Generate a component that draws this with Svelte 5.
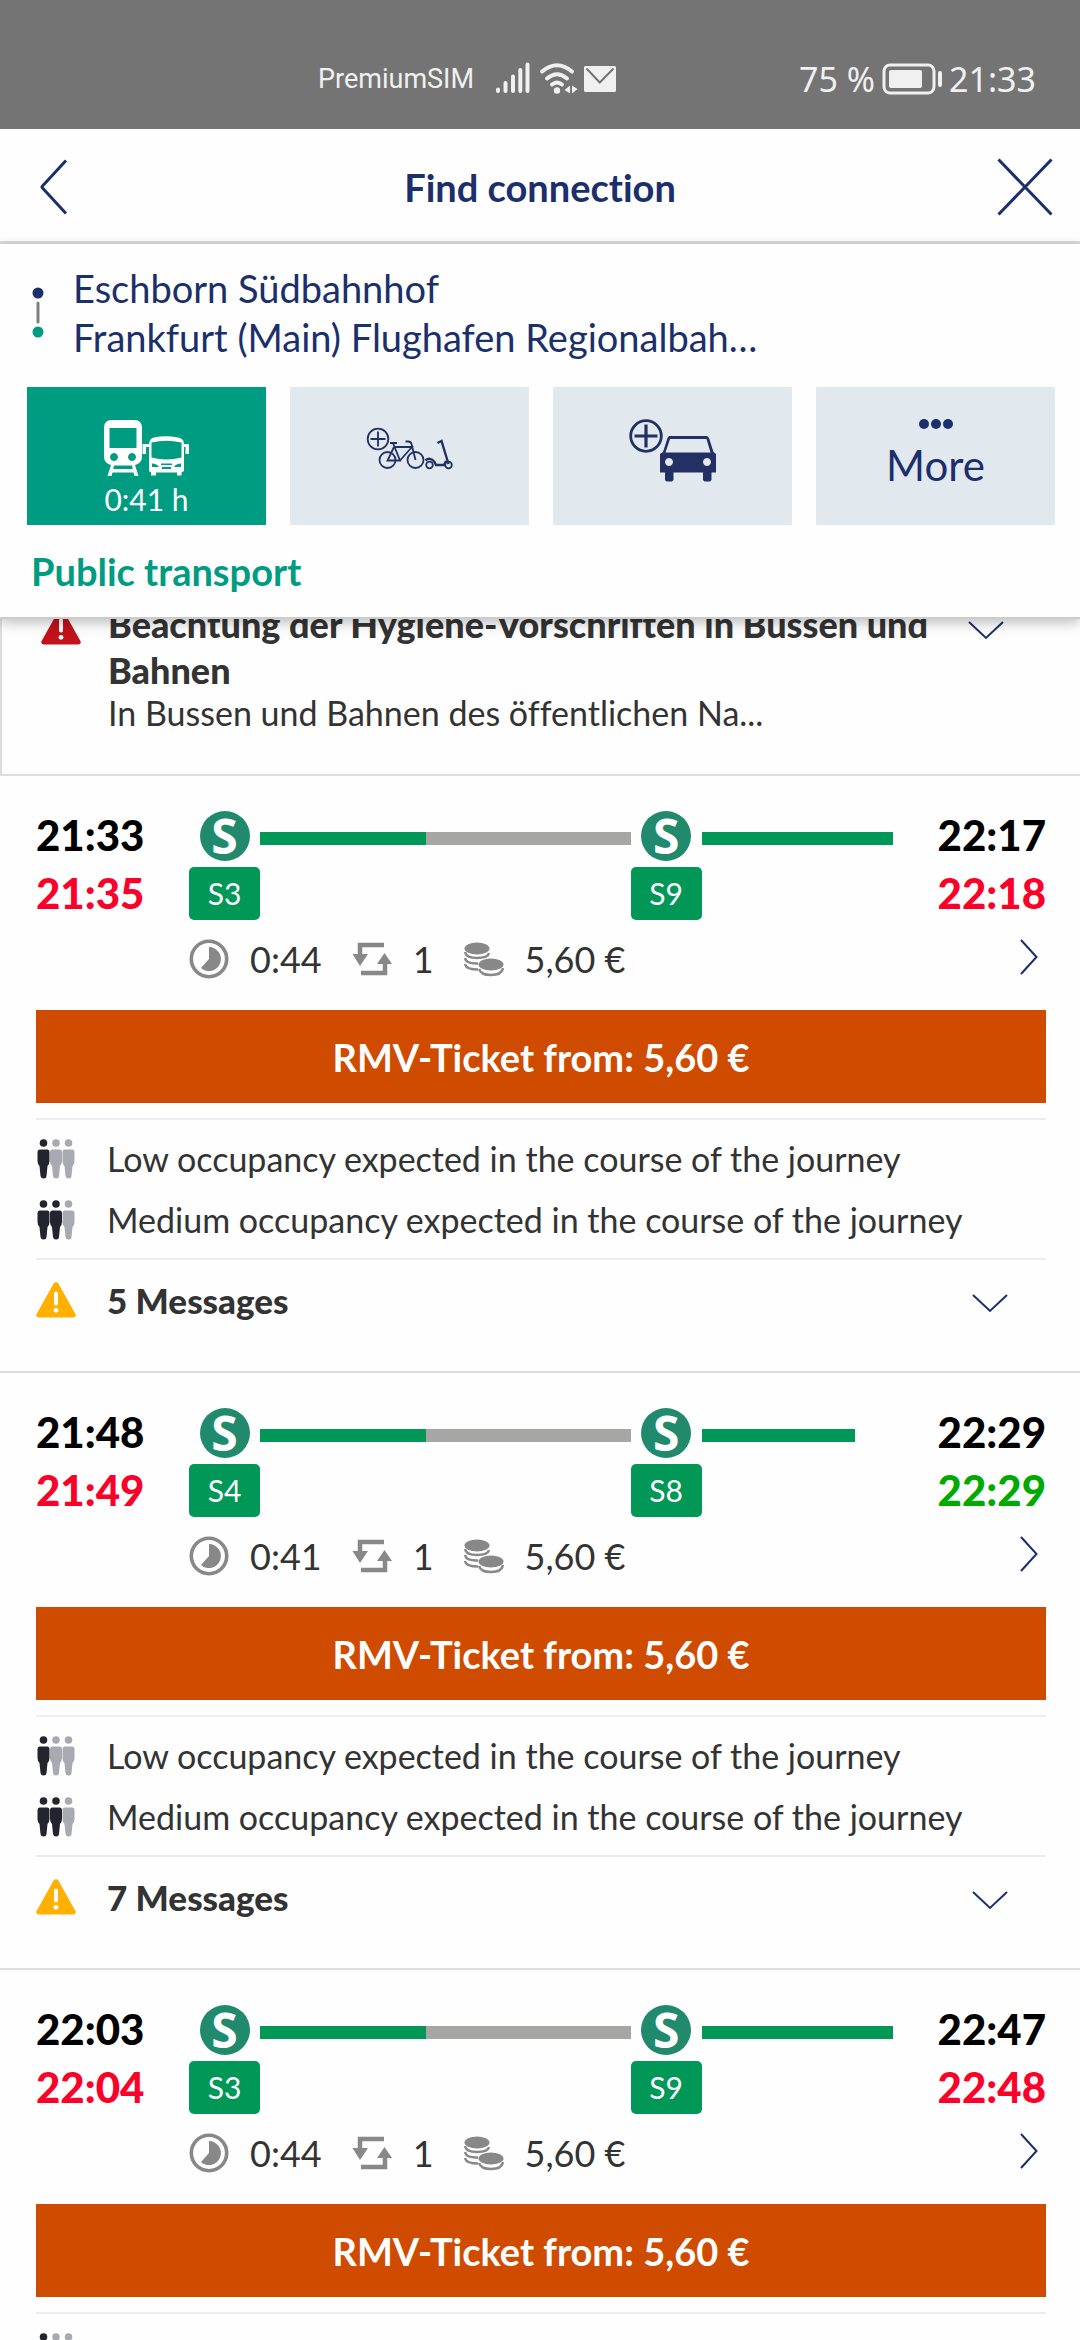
<script lang="ts">
  type Part = { size: number; kind: "ride" | "wait" | "rest" };
  type Leg = { line: string; parts: Part[] };

  const shortRide: Leg["parts"] = [
    { size: 166, kind: "ride" },
    { size: 204, kind: "wait" },
  ];

  const connections = [
    {
      departure: "21:33",
      departureReal: "21:35",
      arrival: "22:17",
      arrivalReal: "22:18",
      onTime: false,
      duration: "0:44",
      changes: 1,
      price: "5,60 €",
      messages: 5,
      legs: [
        { line: "S3", parts: shortRide },
        { line: "S9", parts: [{ size: 191, kind: "ride" }] },
      ] as Leg[],
    },
    {
      departure: "21:48",
      departureReal: "21:49",
      arrival: "22:29",
      arrivalReal: "22:29",
      onTime: true,
      duration: "0:41",
      changes: 1,
      price: "5,60 €",
      messages: 7,
      legs: [
        { line: "S4", parts: shortRide },
        {
          line: "S8",
          parts: [
            { size: 153, kind: "ride" },
            { size: 38, kind: "rest" },
          ],
        },
      ] as Leg[],
    },
    {
      departure: "22:03",
      departureReal: "22:04",
      arrival: "22:47",
      arrivalReal: "22:48",
      onTime: false,
      duration: "0:44",
      changes: 1,
      price: "5,60 €",
      messages: 5,
      legs: [
        { line: "S3", parts: shortRide },
        { line: "S9", parts: [{ size: 191, kind: "ride" }] },
      ] as Leg[],
    },
  ];

  const occupancy = [
    { level: 1, label: "Low occupancy expected in the course of the journey" },
    { level: 2, label: "Medium occupancy expected in the course of the journey" },
  ];
</script>

{#snippet chevronDown()}
  <svg class="chevron" width="36" height="20" viewBox="0 0 36 20" aria-hidden="true">
    <path d="M1 1 L18 17 L35 1" fill="none" stroke="#1a2f6b" stroke-width="2" />
  </svg>
{/snippet}

{#snippet warning(color: string)}
  <svg class="warning" width="40" height="36" viewBox="0 0 40 36" aria-hidden="true">
    <path
      d="M17.6 1.6 a2.8 2.8 0 0 1 4.8 0 L39.4 32 a2.3 2.3 0 0 1 -2 3.5 H2.6 a2.3 2.3 0 0 1 -2 -3.5 Z"
      fill={color}
    />
    <rect x="18" y="9.5" width="4" height="14" rx="2" fill="#fff" />
    <circle cx="20" cy="28.3" r="2.4" fill="#fff" />
  </svg>
{/snippet}

<div class="screen">
  <div class="status-bar">
    <div class="status-left">
      <span class="carrier">PremiumSIM</span>
      <svg width="124" height="48" viewBox="0 0 124 48" aria-hidden="true">
        <g fill="none" stroke="#f0f0f0" stroke-width="4" stroke-linecap="round">
          <path d="M4 34.5 V36 M11.5 28 V36 M19 21.5 V36 M26.3 15 V36 M33.5 9.5 V36" />
          <path d="M48 16.5 Q63 4 78 16.5" />
          <path d="M53 23.5 Q63 15 73 23.5" />
          <path d="M58 29.5 Q63 25.5 68 29.5" />
        </g>
        <circle cx="63" cy="35.5" r="3.2" fill="#f0f0f0" />
        <path d="M70.5 35 L76 30.5 V38.5 Z M83.5 34 L78 38.5 V30.5 Z" fill="#f0f0f0" />
        <rect x="90" y="11" width="32" height="26" rx="1.5" fill="#f0f0f0" />
        <path d="M92.5 13.5 L105.8 27.5 L119.5 13.5" fill="none" stroke="#747474" stroke-width="2" />
      </svg>
    </div>
    <div class="status-right">
      <span>75 %</span>
      <svg width="62" height="34" viewBox="0 0 62 34" aria-hidden="true">
        <rect x="3" y="3" width="50" height="28" rx="6" fill="none" stroke="#f0f0f0" stroke-width="3" />
        <rect x="8" y="8" width="33" height="18" rx="2" fill="#f0f0f0" />
        <rect x="57" y="9" width="4" height="16" rx="2" fill="#f0f0f0" />
      </svg>
      <span>21:33</span>
    </div>
  </div>

  <header class="title-bar">
    <button class="icon-button back" aria-label="Back">
      <svg width="28" height="56" viewBox="0 0 28 56">
        <path d="M26 1.5 L2.5 27 Q1.5 28 2.5 29 L26 54.5" fill="none" stroke="#1a2f6b" stroke-width="3" />
      </svg>
    </button>
    <h1>Find connection</h1>
    <button class="icon-button" aria-label="Close">
      <svg width="56" height="58" viewBox="0 0 56 58">
        <path d="M1.5 1.5 L54.5 56.5 M54.5 1.5 L1.5 56.5" fill="none" stroke="#1a2f6b" stroke-width="3" />
      </svg>
    </button>
  </header>

  <section class="search">
    <div class="route">
      <svg width="14" height="54" viewBox="0 0 14 54" aria-hidden="true">
        <circle cx="7" cy="7" r="5.5" fill="#1a2f6b" />
        <path d="M7 17 V36" stroke="#808080" stroke-width="3" stroke-linecap="round" />
        <circle cx="7" cy="46" r="5.5" fill="#009c82" />
      </svg>
      <div class="stations">
        <div>Eschborn Südbahnhof</div>
        <div>Frankfurt (Main) Flughafen Regionalbah…</div>
      </div>
    </div>

    <nav class="modes">
      <button class="mode active">
        <svg width="88" height="58" viewBox="0 0 88 58" aria-hidden="true">
          <path
            fill="#fff"
            fill-rule="evenodd"
            d="M8 1 H32 a7 7 0 0 1 7 7 V38 a8 8 0 0 1 -7 8 L35.5 57 H31.5 L30.5 53.5 H9.5 L8.5 57 H4.5 L8 46 a8 8 0 0 1 -7 -8 V8 a7 7 0 0 1 7 -7 Z M6.5 9 V29 H33.5 V9 Z M11 34 a4 4 0 1 0 .01 0 Z M29 34 a4 4 0 1 0 .01 0 Z M11 46.5 L10.3 50 H29.7 L29 46.5 Z"
          />
          <path
            fill="#fff"
            fill-rule="evenodd"
            d="M46 26 Q46 19.5 51 18.5 Q63 16 75 18.5 Q81 19.5 81 25 H86 V35 H82.5 V28 H81 V52 L78.5 53.5 V56.5 H74 V53.5 H53 V56.5 H48 V53.5 L46 52 V28 H43 V35 H39.5 V25 H46 Z M48.5 23.5 V38.5 Q63 42.5 78.5 38.5 V23.5 Q63 20 48.5 23.5 Z M49 44.5 V48 H56 Q54 44.5 49 44.5 Z M78 44.5 V48 H71 Q73 44.5 78 44.5 Z M58 44.5 V46 H69 V44.5 Z M59 48 V50 H68 V48 Z"
          />
        </svg>
        <span class="mode-time">0:41 h</span>
      </button>
      <button class="mode" aria-label="Bike and scooter">
        <svg width="88" height="58" viewBox="0 0 88 58">
          <g fill="none" stroke="#233063" stroke-width="1.8">
            <circle cx="12" cy="20" r="10.3" />
            <path d="M12 12.5 V27.5 M4.5 20 H19.5" />
            <circle cx="21.5" cy="41" r="8" />
            <circle cx="49.5" cy="41" r="8" />
            <path d="M24 24 H31 M27 24 L34 41.5 H21.5 L28 28 M28 28 H46 L34 41.5 M39.5 22.5 H42 Q45 22.5 45.5 25 L49.5 41" />
            <circle cx="63.5" cy="46" r="3.3" />
            <circle cx="82.5" cy="46" r="3.3" />
            <path d="M59.5 41.5 Q64 37.5 68.5 43 L70 46 H78 L80 42 M71.5 24 L75.5 22 L82.5 45" stroke-width="2.4" />
          </g>
        </svg>
      </button>
      <button class="mode" aria-label="Car">
        <svg width="88" height="66" viewBox="0 0 88 66">
          <circle cx="17" cy="17" r="15.3" fill="none" stroke="#233063" stroke-width="2.8" />
          <path d="M17 5.5 V28.5 M5.5 17 H28.5" stroke="#233063" stroke-width="3.2" />
          <path
            fill="#233063"
            fill-rule="evenodd"
            d="M40 17 H78 L80 19 L84.5 33 L87 35 V53.5 H82.5 V61 L81 62.5 H75.5 L74 61 V53.5 H44.5 V61 L43 62.5 H37.5 L36 61 V53.5 H31 V35 L34 33 L38.5 19 Z M41 20 L36.5 33.5 H81.5 L77.5 20 Z M40 39 a4 4 0 1 0 .01 0 Z M78 39 a4 4 0 1 0 .01 0 Z"
          />
        </svg>
      </button>
      <button class="mode more">
        <svg width="34" height="10" viewBox="0 0 34 10" fill="#1a2f6b" aria-hidden="true">
          <circle cx="5" cy="5" r="5" />
          <circle cx="17" cy="5" r="5" />
          <circle cx="29" cy="5" r="5" />
        </svg>
        <span>More</span>
      </button>
    </nav>

    <h2>Public transport</h2>
  </section>

  <main class="results">
    <section class="alert">
      {@render warning("#c2121c")}
      <div class="alert-text">
        <strong>Beachtung der Hygiene-Vorschriften in Bussen und Bahnen</strong>
        <p>In Bussen und Bahnen des öffentlichen Na...</p>
      </div>
      <button class="icon-button expand" aria-label="Show message">{@render chevronDown()}</button>
    </section>

    {#each connections as c}
      <article class="connection">
        <div class="timeline">
          <div class="times">
            <div>{c.departure}</div>
            <div class="late">{c.departureReal}</div>
          </div>
          <div class="track">
            {#each c.legs as leg}
              <div class="stop">
                <span class="s-logo">S</span>
                <span class="line">{leg.line}</span>
              </div>
              {#each leg.parts as part}
                <div class="bar {part.kind}" style="flex-grow: {part.size}"></div>
              {/each}
            {/each}
          </div>
          <div class="times end">
            <div>{c.arrival}</div>
            <div class={c.onTime ? "punctual" : "late"}>{c.arrivalReal}</div>
          </div>
        </div>

        <div class="info">
          <span class="fact">
            <svg width="40" height="42" viewBox="0 0 40 42" aria-hidden="true">
              <circle cx="20" cy="21" r="17.7" fill="none" stroke="#888" stroke-width="3.6" />
              <path d="M20 9 A12 12 0 1 1 12 30 L20 21 Z" fill="#888" />
            </svg>
            {c.duration}
          </span>
          <span class="fact">
            <svg width="40" height="36" viewBox="0 0 40 36" aria-hidden="true">
              <path d="M32 4 H8 V15 M9 32 H33 V20" fill="none" stroke="#888" stroke-width="4.5" />
              <path d="M0.5 13 H16 L8 25 Z M25 23 H40 L32.5 12 Z" fill="#888" />
            </svg>
            {c.changes}
          </span>
          <span class="fact">
            <svg width="40" height="36" viewBox="0 0 40 36" aria-hidden="true">
              <ellipse cx="13" cy="7.5" rx="12.5" ry="6" fill="#888" />
              <g fill="none" stroke="#888" stroke-width="2.4">
                <path d="M1 11 Q2 17 13 17 Q24 17 25 12" />
                <path d="M1 17 Q2 23 14 22.5" />
                <path d="M1 23 Q2 28.5 14 28.5" />
                <path d="M15 28 Q17 34 27 34 Q38 34 39 27" />
              </g>
              <ellipse cx="27" cy="23.5" rx="12.5" ry="6" fill="#888" />
            </svg>
            {c.price}
          </span>
          <button class="icon-button details" aria-label="Show details">
            <svg width="18" height="36" viewBox="0 0 18 36">
              <path d="M1 1 L16.5 18 L1 35" fill="none" stroke="#1a2f6b" stroke-width="2" />
            </svg>
          </button>
        </div>

        <button class="ticket">RMV-Ticket from: {c.price}</button>

        <ul class="occupancy">
          {#each occupancy as o}
            <li>
              <svg width="40" height="40" viewBox="0 0 40 40" aria-hidden="true">
                {#each [2, 1, 0] as i}
                  <g fill={i < o.level ? "#24242e" : "#a9a9b2"} transform="translate({i * 12.5} 0)">
                    <circle cx="7.5" cy="4" r="3.8" />
                    <path
                      d="M3.5 10.5 H11.5 Q13.5 10.5 13.5 13 V22 Q13.5 25 11.5 27 L10.5 37 Q10.3 39.5 7.5 39.5 Q5 39.5 4.5 37 L3.5 27 Q1.5 25 1.5 22 V13 Q1.5 10.5 3.5 10.5 Z"
                    />
                  </g>
                {/each}
              </svg>
              {o.label}
            </li>
          {/each}
        </ul>

        <button class="messages">
          {@render warning("#ffb000")}
          <span>{c.messages} Messages</span>
          {@render chevronDown()}
        </button>
      </article>
    {/each}
  </main>
</div>

<style>
  :global(body) {
    background: #fefefe;
  }

  .screen {
    height: 100vh;
    display: flex;
    flex-direction: column;
    overflow: hidden;
    font-family: Lato, sans-serif;
    font-variant-ligatures: none;
    color: #333;
  }

  button {
    font: inherit;
    font-variant-ligatures: none;
    color: inherit;
    border: none;
    padding: 0;
    background: none;
    cursor: pointer;
  }

  svg {
    display: block;
    flex-shrink: 0;
  }

  .status-bar {
    flex-shrink: 0;
    display: flex;
    justify-content: space-between;
    align-items: center;
    height: 101px;
    padding: 28px 44px 0 318px;
    background: #747474;
    color: #f0f0f0;
    font-family: "Noto Sans", sans-serif;
    font-size: 34px;
  }

  .status-left,
  .status-right {
    display: flex;
    align-items: center;
    gap: 20px;
  }

  .status-right {
    gap: 6px;
  }

  .carrier {
    font-family: Roboto, sans-serif;
    font-size: 27px;
  }

  .title-bar {
    flex-shrink: 0;
    display: flex;
    justify-content: space-between;
    align-items: center;
    height: 108px;
    padding: 4px 27px 0;
    border-bottom: 3px solid #d9d9d9;
    background: #fefefe;
    color: #1a2f6b;
  }

  .icon-button {
    display: flex;
  }

  .back {
    width: 56px;
    padding-left: 13px;
  }

  h1,
  h2 {
    margin: 0;
    font-size: 38px;
    font-weight: 700;
  }

  .search {
    position: relative;
    z-index: 1;
    flex-shrink: 0;
    padding: 20px 25px 0 27px;
    background: #fefefe;
    border-bottom: 2px solid #ccc;
    box-shadow: 0 4px 12px rgba(0, 0, 0, 0.25);
  }

  .route {
    display: flex;
    align-items: center;
    gap: 28px;
    padding: 0 4px;
    color: #1a2f6b;
    font-size: 38px;
    line-height: 49px;
  }

  .modes {
    display: grid;
    grid-template-columns: repeat(4, 1fr);
    gap: 24px;
    margin-top: 25px;
  }

  .mode {
    display: flex;
    flex-direction: column;
    align-items: center;
    height: 138px;
    padding-top: 32px;
    box-sizing: border-box;
    background: #e1e8ee;
    color: #1a2f6b;
  }

  .mode.active {
    background: #009c82;
    color: #fff;
  }

  .mode-time {
    font-size: 30px;
    line-height: 40px;
    margin-top: 2px;
  }

  .mode.more {
    gap: 12px;
    font-size: 42px;
    line-height: 48px;
  }

  h2 {
    padding: 0 4px;
    line-height: 92px;
    color: #009c82;
  }

  .results {
    flex: 1;
    min-height: 0;
    overflow: hidden;
  }

  .alert {
    display: flex;
    align-items: flex-start;
    gap: 27px;
    /* list is scrolled a little under the search box */
    margin-top: -26px;
    padding: 8px 76px 41px 39px;
    border-left: 2px solid #ddd;
    border-bottom: 2px solid #ddd;
    font-size: 34px;
  }

  .alert .warning {
    margin-top: 8px;
  }

  .alert .expand {
    margin-top: 20px;
  }

  .alert-text {
    flex: 1;
  }

  .alert strong {
    display: block;
    font-size: 36px;
    font-weight: 900;
    line-height: 46px;
  }

  .alert p {
    margin: 0;
    line-height: 40px;
  }

  .connection {
    padding: 30px 34px 31px 36px;
    border-bottom: 2px solid #ddd;
  }

  .timeline {
    display: flex;
  }

  .times {
    width: 153px;
    font-size: 42px;
    font-weight: 900;
    line-height: 58px;
    color: #000;
  }

  .times.end {
    text-align: right;
  }

  .times .late {
    color: #fb0029;
  }

  .times .punctual {
    color: #00aa00;
  }

  .track {
    flex: 1;
    display: flex;
    align-items: flex-start;
    padding-top: 5px;
  }

  .stop {
    width: 71px;
    display: flex;
    flex-direction: column;
    align-items: center;
    gap: 6px;
  }

  .s-logo {
    width: 50px;
    height: 50px;
    border-radius: 50%;
    background: #218a6d;
    color: #fff;
    font-family: "Open Sans", sans-serif;
    font-size: 48px;
    font-weight: 700;
    line-height: 50px;
    text-align: center;
  }

  .line {
    width: 100%;
    border-radius: 5px;
    background: #009757;
    color: #fff;
    font-size: 30px;
    line-height: 53px;
    text-align: center;
  }

  .bar {
    flex-basis: 0;
    height: 13px;
    margin-top: 21px;
  }

  .bar.ride {
    background: #009757;
  }

  .bar.wait {
    background: #a6a6a4;
  }

  .info {
    display: flex;
    align-items: center;
    gap: 30px;
    height: 40px;
    margin: 17px 0 31px 153px;
    font-size: 36px;
  }

  .fact {
    display: flex;
    align-items: center;
    gap: 21px;
  }

  .details {
    align-self: flex-start;
    margin-left: auto;
    margin-right: 8px;
  }

  .ticket {
    display: block;
    width: 100%;
    height: 93px;
    background: #cf4b00;
    color: #fff;
    font-size: 38px;
    font-weight: 700;
  }

  .occupancy {
    list-style: none;
    margin: 15px 0 0;
    padding: 8px 0;
    border-top: 2px solid #eee;
    border-bottom: 2px solid #eee;
    font-size: 34px;
    line-height: 61px;
  }

  .occupancy li {
    display: flex;
    align-items: center;
    gap: 31px;
  }

  .messages {
    display: flex;
    align-items: center;
    gap: 31px;
    width: 100%;
    height: 80px;
    padding-right: 38px;
    font-size: 35px;
    font-weight: 900;
  }

  .messages .chevron {
    margin-top: 8px;
    margin-left: auto;
  }
</style>
